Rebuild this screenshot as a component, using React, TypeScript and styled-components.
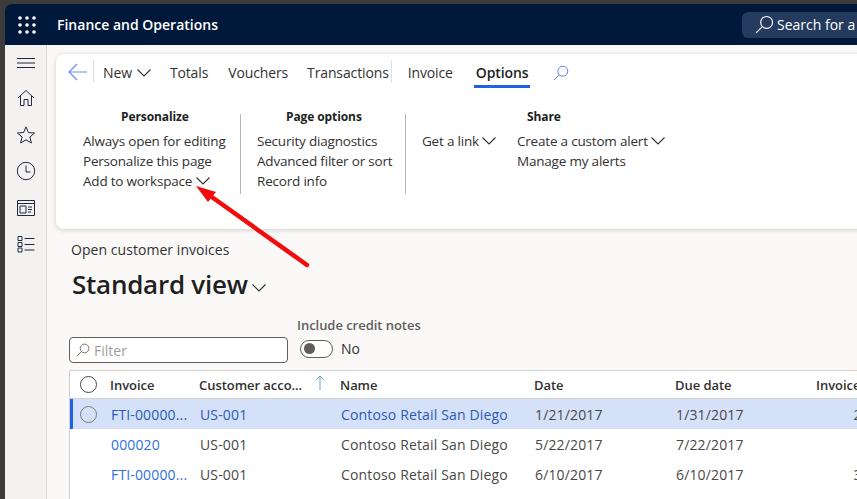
import styled, { createGlobalStyle } from "styled-components";

const GlobalStyle = createGlobalStyle`
  html, body {
    margin: 0;
    padding: 0;
    height: 100%;
    overflow: hidden;
    background: #3b3b3b;
  }
  #root {
    height: 100%;
  }
`;

const Frame = styled.div`
  position: relative;
  width: 857px;
  height: 499px;
  padding: 4px 0 0 5px;
  box-sizing: border-box;
  overflow: hidden;
  background-color: #3b3b3b;
  font-family: "Open Sans", "Noto Sans", sans-serif;
  font-size: 13px;
  color: #323130;
`;

const Shell = styled.div`
  display: flex;
  flex-direction: column;
  width: 900px;
  height: 495px;
  border-top-left-radius: 7px;
  overflow: hidden;
`;

const TopBar = styled.header`
  display: flex;
  align-items: center;
  flex: 0 0 41px;
  background-color: #00183a;
  color: #fff;
`;

const Waffle = styled.svg`
  width: 18px;
  height: 18px;
  margin-left: 13px;
  fill: #fff;
`;

const AppTitle = styled.div`
  margin-left: 21px;
  font-size: 14px;
  font-weight: 600;
`;

const SearchBox = styled.div`
  display: flex;
  align-items: center;
  gap: 3px;
  width: 160px;
  height: 26px;
  margin-left: 524px;
  padding-left: 13px;
  box-sizing: border-box;
  border-radius: 6px;
  background-color: #243a5e;
  font-size: 14px;
  white-space: nowrap;
`;

const Body = styled.div`
  display: flex;
  flex: 1;
  min-height: 0;
`;

const Sidebar = styled.nav`
  display: flex;
  flex-direction: column;
  align-items: center;
  flex: 0 0 42px;
  padding-top: 8px;
  box-sizing: border-box;
  background-color: #f3f2f1;
  border-right: 1px solid #dcdad8;
`;

const SideIcon = styled.svg<{ $tight?: boolean }>`
  width: 20px;
  height: 20px;
  margin-bottom: ${(p) => (p.$tight ? 15 : 16.6)}px;
  fill: none;
  stroke: #1f2a3c;
  stroke-width: 1;
`;

const Main = styled.main`
  flex: 1;
  min-width: 0;
  padding: 9px 0 0 9px;
  background-color: #faf9f8;
`;

const ActionCard = styled.section`
  height: 175px;
  padding: 5px 0 0 11px;
  box-sizing: border-box;
  border-radius: 8px 0 0 8px;
  background-color: #fff;
  box-shadow: 0 1px 5px rgba(0, 0, 0, 0.18);
`;

const ToolRow = styled.div`
  display: flex;
  align-items: center;
  height: 27px;
`;

const BackIcon = styled.svg`
  width: 19px;
  height: 18px;
  margin-left: 1px;
  margin-top: -2px;
  fill: none;
  stroke: #6f8ee8;
  stroke-width: 1.2;
`;

const ToolDivider = styled.div<{ $gap: number; $left: number }>`
  width: 1px;
  height: 23px;
  margin: -2px ${(p) => p.$gap}px 0 ${(p) => p.$left}px;
  background-color: #e1dfdd;
`;

const Tool = styled.div<{ $active?: boolean; $right: number }>`
  display: flex;
  align-items: center;
  gap: 5px;
  position: relative;
  margin-right: ${(p) => p.$right}px;
  font-size: 14px;
  letter-spacing: -0.13px;
  font-weight: ${(p) => (p.$active ? 600 : 400)};
  color: ${(p) => (p.$active ? "#201f1e" : "#323130")};
  ${(p) =>
    p.$active &&
    `&::after {
      content: "";
      position: absolute;
      left: -2px;
      right: -2px;
      bottom: -6px;
      height: 3px;
      background-color: #1f63e0;
    }`}
`;

const Chevron = styled.svg<{ $size?: number }>`
  width: ${(p) => p.$size ?? 14}px;
  height: ${(p) => ((p.$size ?? 14) * 8) / 14}px;
  flex: none;
  fill: none;
  stroke: #323130;
  stroke-width: 1.1;
`;

const SearchIcon = styled.svg<{ $size: number }>`
  width: ${(p) => p.$size}px;
  height: ${(p) => p.$size}px;
  flex: none;
  fill: none;
  stroke-width: 1.1;
`;

const Ribbon = styled.div`
  display: flex;
  align-items: flex-start;
  margin-top: 22px;
`;

const Group = styled.div<{ $width: number }>`
  width: ${(p) => p.$width}px;
  padding-left: 16px;
  box-sizing: border-box;
`;

const GroupDivider = styled.div`
  width: 1px;
  height: 80px;
  margin-top: 6px;
  background-color: #b8b6b4;
`;

const GroupTitle = styled.div<{ $shift: number }>`
  height: 23px;
  margin-left: ${(p) => p.$shift}px;
  font-size: 12px;
  font-weight: 700;
  letter-spacing: -0.1px;
  line-height: 17px;
  color: #201f1e;
`;

const ColumnSet = styled.div`
  display: flex;
`;

const LinkColumn = styled.div`
  width: 95px;
`;

const RibbonItem = styled.div`
  display: flex;
  align-items: center;
  gap: 3.5px;
  height: 20px;
  font-size: 13.5px;
  letter-spacing: -0.2px;
  white-space: nowrap;
  color: #323130;
`;

const PageHead = styled.div`
  padding: 12px 0 0 15px;
`;

const Caption = styled.div`
  font-size: 14px;
  letter-spacing: 0.05px;
  line-height: 18px;
  color: #323130;
`;

const ViewTitle = styled.div`
  display: flex;
  align-items: center;
  gap: 4px;
  margin-top: 5px;
  margin-left: 1px;
  height: 40px;
  font-size: 26px;
  font-weight: 600;
  letter-spacing: -0.25px;
  color: #201f1e;
`;

const ViewChevron = styled.span`
  display: flex;
  margin-top: 7px;
`;

const FilterRow = styled.div`
  display: flex;
  align-items: flex-end;
  gap: 9px;
  margin-top: 12px;
  margin-left: 13px;
`;

const FilterBox = styled.div`
  display: flex;
  align-items: center;
  gap: 4px;
  width: 219px;
  height: 26px;
  padding-left: 6px;
  box-sizing: border-box;
  border: 1px solid #605e5c;
  border-radius: 4px;
  background-color: #fff;
  font-size: 14px;
  color: #a19f9d;
`;

const ToggleField = styled.div`
  margin-bottom: 5px;
`;

const ToggleLabel = styled.div`
  margin-bottom: 5px;
  font-size: 13px;
  font-weight: 600;
  letter-spacing: -0.04px;
  color: #605e5c;
  white-space: nowrap;
`;

const ToggleRow = styled.div`
  display: flex;
  align-items: center;
  gap: 8px;
  margin-left: 3px;
  font-size: 14px;
`;

const Toggle = styled.div`
  display: flex;
  align-items: center;
  width: 33px;
  height: 18px;
  padding-left: 3px;
  box-sizing: border-box;
  border: 1px solid #605e5c;
  border-radius: 9px;
  background-color: #fff;
  &::before {
    content: "";
    width: 11px;
    height: 11px;
    border-radius: 50%;
    background-color: #605e5c;
  }
`;

const Grid = styled.div`
  margin: 7px 0 0 13px;
  border-top: 1px solid #d2d0ce;
  border-left: 1px solid #d2d0ce;
  background-color: #fff;
  height: 130px;
`;

const GridLine = styled.div<{ $head?: boolean; $selected?: boolean }>`
  display: grid;
  grid-template-columns: 40px 89px 141px 194px 141px 141px 94px;
  align-items: center;
  height: ${(p) => (p.$head ? 28 : 30)}px;
  box-sizing: border-box;
  ${(p) => p.$head && "border-bottom: 1px solid #d2d0ce;"}
  ${(p) => p.$selected && "background-color: #d4e1f9; box-shadow: inset 3px 0 0 #1f63e0;"}
  font-size: 14px;
  letter-spacing: 0.15px;
  white-space: nowrap;
  color: #4a4846;
`;

const HeadCell = styled.div`
  display: flex;
  align-items: center;
  font-size: 13px;
  font-weight: 600;
  letter-spacing: -0.05px;
  color: #323130;
`;

const Cell = styled.div<{ $link?: boolean; $right?: boolean; $dark?: boolean }>`
  padding-left: 1px;
  text-align: ${(p) => (p.$right ? "right" : "left")};
  color: ${(p) => (p.$link ? (p.$dark ? "#2a5bb8" : "#2f6fdc") : "inherit")};
`;

const SortArrow = styled.svg`
  width: 10px;
  height: 16px;
  margin-left: 13px;
  margin-top: -4px;
  fill: none;
  stroke: #6f9bd8;
  stroke-width: 1;
`;

const RowCheck = styled.div<{ $muted?: boolean }>`
  width: 15px;
  height: 15px;
  margin-left: 10px;
  box-sizing: content-box;
  border: 1px solid ${(p) => (p.$muted ? "#7d7b79" : "#4a4846")};
  border-radius: 50%;
`;

const ArrowOverlay = styled.svg`
  position: absolute;
  left: 0;
  top: 0;
  width: 857px;
  height: 499px;
  pointer-events: none;
`;

const ChevronDown = ({ size }: { size?: number }) => (
  <Chevron $size={size} viewBox="0 0 14 8">
    <path d="M0.5 0.5 L7 7 L13.5 0.5" />
  </Chevron>
);

const Magnifier = ({ size, color }: { size: number; color: string }) => (
  <SearchIcon $size={size} viewBox="0 0 18 18" stroke={color}>
    <circle cx="11" cy="7" r="5.6" />
    <path d="M7 11 L1 17" />
  </SearchIcon>
);

const rows = [
  { invoice: "FTI-00000...", date: "1/21/2017", due: "1/31/2017", amount: "2,000.00", selected: true },
  { invoice: "000020", date: "5/22/2017", due: "7/22/2017", amount: "500.00", selected: false },
  { invoice: "FTI-00000...", date: "6/10/2017", due: "6/10/2017", amount: "3,000.00", selected: false },
];

const App = () => {
  return (
    <Frame>
      <GlobalStyle />
      <Shell>
        <TopBar>
          <Waffle viewBox="0 0 18 18">
            {[2, 9, 16].map((y) =>
              [2, 9, 16].map((x) => <circle key={`${x}-${y}`} cx={x} cy={y} r="1.8" />)
            )}
          </Waffle>
          <AppTitle>Finance and Operations</AppTitle>
          <SearchBox>
            <Magnifier size={19} color="#fff" />
            Search for a page
          </SearchBox>
        </TopBar>
        <Body>
          <Sidebar>
            <SideIcon $tight viewBox="0 0 20 20">
              <path d="M1 5.5 H19 M1 10 H19 M1 14.5 H19" />
            </SideIcon>
            <SideIcon viewBox="0 0 20 20">
              <path d="M2 10 L10 2.5 L18 10 M4.5 8 V17.5 H8 V11.5 H12 V17.5 H15.5 V8" />
            </SideIcon>
            <SideIcon viewBox="0 0 20 20">
              <path d="M10 1.8 L12.4 7.6 L18.6 8 L13.9 12 L15.4 18 L10 14.8 L4.6 18 L6.1 12 L1.4 8 L7.6 7.6 Z" />
            </SideIcon>
            <SideIcon viewBox="0 0 20 20">
              <circle cx="10" cy="10" r="8.7" />
              <path d="M10 4.5 V11 H14.5" />
            </SideIcon>
            <SideIcon viewBox="0 0 20 20">
              <path d="M1.5 2.5 H18.5 V17.5 H1.5 Z M1.5 5.5 H18.5 M4 8 H10 V15 H4 Z M12 9 H16 M12 11.5 H16 M12 14 H15" />
            </SideIcon>
            <SideIcon viewBox="0 0 20 20">
              <path d="M2 2.5 H6 V6.5 H2 Z M2 8.5 H6 V12.5 H2 Z M2 14 H6 V18 H2 Z M8.5 4.5 H18.5 M8.5 10.5 H18.5 M8.5 16 H18.5" />
            </SideIcon>
          </Sidebar>
          <Main>
            <ActionCard>
              <ToolRow>
                <BackIcon viewBox="0 0 19 18">
                  <path d="M19 9 H1 M9 1 L1 9 L9 17" />
                </BackIcon>
                <ToolDivider $left={6} $gap={9} />
                <Tool $right={19}>
                  New
                  <ChevronDown />
                </Tool>
                <Tool $right={20}>Totals</Tool>
                <Tool $right={19}>Vouchers</Tool>
                <Tool $right={2}>Transactions</Tool>
                <ToolDivider $left={0} $gap={16} />
                <Tool $right={23}>Invoice</Tool>
                <Tool $active $right={25}>
                  Options
                </Tool>
                <Magnifier size={16} color="#5b7fe0" />
              </ToolRow>
              <Ribbon>
                <Group $width={173}>
                  <GroupTitle $shift={38}>Personalize</GroupTitle>
                  <RibbonItem>Always open for editing</RibbonItem>
                  <RibbonItem>Personalize this page</RibbonItem>
                  <RibbonItem>
                    Add to workspace
                    <ChevronDown />
                  </RibbonItem>
                </Group>
                <GroupDivider />
                <Group $width={164}>
                  <GroupTitle $shift={29}>Page options</GroupTitle>
                  <RibbonItem>Security diagnostics</RibbonItem>
                  <RibbonItem>Advanced filter or sort</RibbonItem>
                  <RibbonItem>Record info</RibbonItem>
                </Group>
                <GroupDivider />
                <Group $width={300}>
                  <GroupTitle $shift={105}>Share</GroupTitle>
                  <ColumnSet>
                    <LinkColumn>
                      <RibbonItem>
                        Get a link
                        <ChevronDown />
                      </RibbonItem>
                    </LinkColumn>
                    <div>
                      <RibbonItem>
                        Create a custom alert
                        <ChevronDown />
                      </RibbonItem>
                      <RibbonItem>Manage my alerts</RibbonItem>
                    </div>
                  </ColumnSet>
                </Group>
              </Ribbon>
            </ActionCard>
            <PageHead>
              <Caption>Open customer invoices</Caption>
              <ViewTitle>
                Standard view
                <ViewChevron>
                  <ChevronDown />
                </ViewChevron>
              </ViewTitle>
            </PageHead>
            <FilterRow>
              <FilterBox>
                <Magnifier size={14} color="#605e5c" />
                Filter
              </FilterBox>
              <ToggleField>
                <ToggleLabel>Include credit notes</ToggleLabel>
                <ToggleRow>
                  <Toggle />
                  No
                </ToggleRow>
              </ToggleField>
            </FilterRow>
            <Grid>
              <GridLine $head>
                <RowCheck />
                <HeadCell>Invoice</HeadCell>
                <HeadCell>
                  Customer acco...
                  <SortArrow viewBox="0 0 10 16">
                    <path d="M5 15 V1 M1.5 4.5 L5 1 L8.5 4.5" />
                  </SortArrow>
                </HeadCell>
                <HeadCell>Name</HeadCell>
                <HeadCell>Date</HeadCell>
                <HeadCell>Due date</HeadCell>
                <HeadCell>Invoice amount</HeadCell>
              </GridLine>
              {rows.map((row) => (
                <GridLine key={row.date} $selected={row.selected}>
                  {row.selected ? <RowCheck $muted /> : <span />}
                  <Cell $link $dark={row.selected}>
                    {row.invoice}
                  </Cell>
                  <Cell $link={row.selected} $dark>
                    US-001
                  </Cell>
                  <Cell $link={row.selected} $dark>
                    Contoso Retail San Diego
                  </Cell>
                  <Cell>{row.date}</Cell>
                  <Cell>{row.due}</Cell>
                  <Cell $right>{row.amount}</Cell>
                </GridLine>
              ))}
            </Grid>
          </Main>
        </Body>
      </Shell>
      <ArrowOverlay viewBox="0 0 857 499">
        <path d="M307 265 L209 195" stroke="#f20c0c" strokeWidth="4.5" strokeLinecap="round" />
        <path d="M196 186 L216 192 L208 202 Z" fill="#f20c0c" />
      </ArrowOverlay>
    </Frame>
  );
};

export default App;
